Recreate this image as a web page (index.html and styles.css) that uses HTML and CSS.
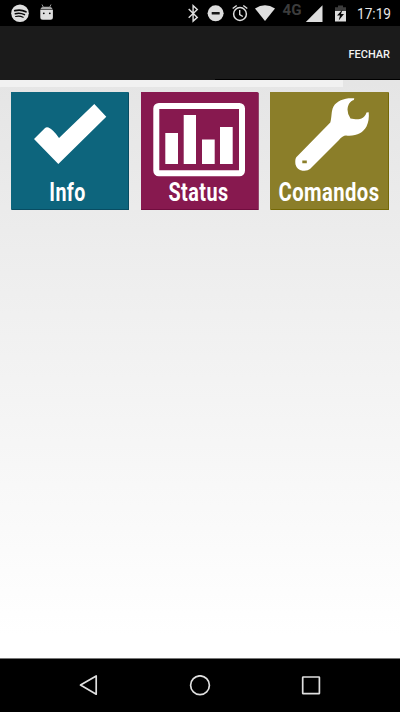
FILE: index.html
```html
<!DOCTYPE html>
<html lang="pt">
<head>
<meta charset="utf-8">
<title>Menu</title>
<link rel="stylesheet" href="styles.css">
</head>
<body>
<div class="screen">
  <header class="status-bar">
    <svg width="400" height="26" viewBox="0 0 400 26">
      <g fill="#dedede">
        <circle cx="20" cy="13.3" r="8.8"/>
        <g fill="none" stroke="#080808" stroke-linecap="round">
          <path d="M14.8 10.7q6-1.7 11.1 1.1" stroke-width="1.8"/>
          <path d="M15.3 13.7q5-1.3 9.2 1" stroke-width="1.5"/>
          <path d="M15.7 16.5q4-1 7.4.8" stroke-width="1.2"/>
        </g>
        <path d="M40.300 9.800h12.600v7.400q0 2.500-2.500 2.500h-7.600q-2.500 0-2.500-2.500z"/>
        <path d="M40.300 9.300q.7-2.600 3.200-2.600h6q2.500 0 3.200 2.600z" fill="#aaa"/>
        <path d="M42 4.500l1.500 3M51 4.500l-1.500 3" stroke="#999" stroke-width="1"/>
        <circle cx="43.8" cy="13.3" r=".9" fill="#000"/>
        <circle cx="49.8" cy="13.3" r=".9" fill="#000"/>
        <path d="M188.700 9l8.600 8.400-4.200 3.700V5.700l4.200 3.800-8.600 8.200" fill="none" stroke="#dedede" stroke-width="1.400"/>
        <circle cx="215.600" cy="13.300" r="8"/>
        <rect x="211.700" y="12" width="8" height="2.600" rx=".5" fill="#161616"/>
        <circle cx="240" cy="14" r="6.400" fill="none" stroke="#dedede" stroke-width="1.500"/>
        <path d="M239.700 10v4.500l3.100 2M232.700 8.500l4-3M247.300 8.500l-4-3" fill="none" stroke="#dedede" stroke-width="1.400"/>
        <path d="M255 8.600q10-6.600 20 0L265 21z"/>
        <path d="M322.500 5.300V22h-16.700z"/>
        <path d="M335 11h11v10.500h-11z"/>
        <path d="M335 11V7.200h3V5.500h5v1.700h3V11z" fill="#3c3c3c"/>
        <path d="M342.500 9.500l-5.500 6h3l-1.300 5 5.300-6.400h-3z" fill="#080808"/>
      </g>
      <text class="network" x="282.500" y="14.500" textLength="19" lengthAdjust="spacingAndGlyphs">4G</text>
      <text class="clock" x="357" y="18.800" textLength="34" lengthAdjust="spacingAndGlyphs">17:19</text>
    </svg>
  </header>
  <div class="action-bar"><span>FECHAR</span></div>
  <main class="content">
    <div class="progress"></div>
    <nav class="tiles">
      <svg class="tile info" viewBox="11 92 118 118">
        <path d="M34 139L44.800 128.300Q46.500 126.500 48.500 127.600Q53.500 130 59 138L94.300 104L106.300 116.700L58.300 164Z"/>
        <text transform="translate(49.300 200.600) scale(1 1.370)" textLength="36.500" lengthAdjust="spacingAndGlyphs">Info</text>
      </svg>
      <svg class="tile status" viewBox="141 92 118 118">
        <rect class="frame" x="156.300" y="106" width="85.700" height="67.300" rx="2.500"/>
        <path d="M165.300 133H178v31h-12.700zM183.700 115H196v49h-12.300zM202 139.500h12.700V164H202zM220 127h12.700v37H220z"/>
        <text transform="translate(168.500 200.600) scale(1 1.370)" textLength="60" lengthAdjust="spacingAndGlyphs">Status</text>
      </svg>
      <svg class="tile commands" viewBox="270 92 119 118">
        <path fill-rule="evenodd" d="M354.300 98.300C346 97.500 337 100 333.500 106.500C331 111 332 117 330.300 122.500L297 156.500C294.800 158.700 295.300 162 295.500 164.500Q297 170 302.500 170.700Q307.500 171.300 310 169L339 140Q342.500 135.700 346 135.500C356 136.500 363 133 366.500 126.500Q369.500 120 368.700 112.300L366.500 112.500C365 117.500 361 119.600 355.500 119.300L350.500 118.500Q347.500 114.500 347.500 109.500C348 104 350 101.500 353.800 100zM302.300 160.500h4.500v2.700h-4.500z"/>
        <text transform="translate(278.500 200.600) scale(1 1.370)" textLength="101" lengthAdjust="spacingAndGlyphs">Comandos</text>
      </svg>
    </nav>
  </main>
  <footer class="nav-bar">
    <svg width="20" height="22" viewBox="0 0 20 22"><path d="M17.200 1v18.200L1.500 10.100z"/></svg>
    <svg width="22" height="22" viewBox="0 0 22 22"><circle cx="11" cy="10.200" r="9.400"/></svg>
    <svg width="20" height="22" viewBox="0 0 20 22"><rect x="1.700" y="2" width="16.700" height="16.700" rx=".5"/></svg>
  </footer>
</div>
</body>
</html>
```
FILE: styles.css
```css
* { box-sizing: border-box; }
body { margin: 0; font-family: Roboto, sans-serif; }
svg { display: block; }
.screen {
  width: 400px;
  height: 712px;
  display: flex;
  flex-direction: column;
  overflow: hidden;
}
.status-bar { height: 26px; background: #000; }
.network { font: bold 14px Roboto, sans-serif; fill: #3c3c3c; }
.clock { font: 400 14.5px Roboto, sans-serif; fill: #e8e8e8; }
.action-bar {
  height: 54px;
  padding: 3px 10px 0 0;
  display: flex;
  align-items: center;
  justify-content: flex-end;
  background: linear-gradient(#000, #000) right bottom / 185px 1px no-repeat #1b1b1b;
  color: #f2f2f2;
  font-size: 11px;
  font-weight: 500;
}
.content {
  height: 578px;
  background: linear-gradient(#e5e5e5, #fff 96%);
}
.progress { width: 343px; height: 7px; background: #f1f1f1; }
.tiles {
  display: flex;
  justify-content: space-between;
  padding: 5px 11px 0;
}
.tile {
  width: 118px;
  height: 118px;
  fill: #fff;
  clip-path: polygon(0 0, calc(100% - 1px) 0, 100% 1px, 100% 100%, 1px 100%, 0 calc(100% - 1px));
}
.tile text { font: bold 18.5px Roboto, sans-serif; letter-spacing: .4px; }
.info { background: #0d657d; box-shadow: inset -1px -1px #084c62; }
.status { background: #87194f; box-shadow: inset -1px -1px #700c3e; }
.commands { width: 119px; background: #8b7e29; box-shadow: inset -1px -1px #746806; }
.frame { fill: none; stroke: #fff; stroke-width: 6; }
.nav-bar {
  height: 54px;
  padding: 16px 79px 0;
  display: flex;
  justify-content: space-between;
  background: #000;
  border-top: 1px solid #777;
}
.nav-bar svg { fill: none; stroke: #e0e0e0; stroke-width: 1.7; stroke-linejoin: round; }
```
